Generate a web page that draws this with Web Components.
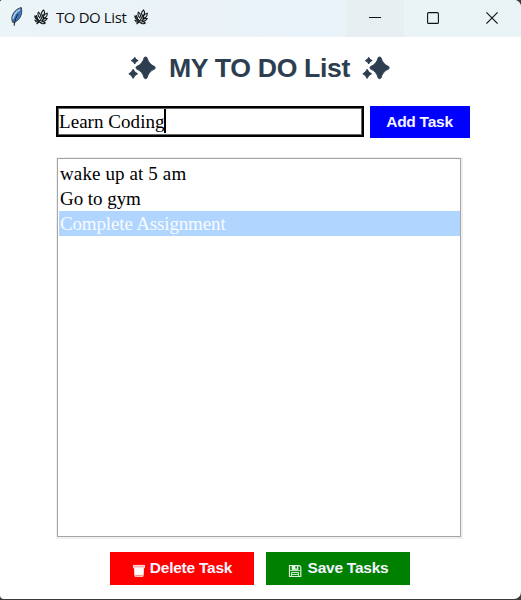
<!DOCTYPE html>
<html lang="en">
<head>
<meta charset="utf-8">
<title>TO DO List</title>
<style>html,body{margin:0;height:100%;overflow:hidden;background:#3a3a3c}</style>
</head>
<body>
<todo-window></todo-window>
<script>
const define = (name, html) => customElements.define(name, class extends HTMLElement {
  constructor() {
    super();
    const t = document.createElement('template');
    t.innerHTML = html;
    this.attachShadow({mode: 'open'}).append(t.content.cloneNode(true));
  }
});

define('feather-icon', `<style>:host{display:block;flex:none;width:14px;height:20px}svg{display:block}</style>
<svg width="14" height="20" viewBox="0 0 14 20"><path d="M11.3 .6C7 1.4 2.4 5.5 1.8 11.2L2.4 15.2 4.8 15.4C10 12.5 12.9 7 11.3 .6Z" fill="#3a78c0" stroke="#3b444f" stroke-width="1"/><path d="M9.8 2.5C6.5 4.5 3.6 8 3 12" stroke="#a9cdec" stroke-width="1.5" fill="none"/><path d="M8 7C6 10 4.5 13 4.2 18.8" stroke="#252a32" stroke-width="1.1" fill="none"/></svg>`);

define('herb-icon', `<style>:host{display:block;flex:none;width:14px;height:16px}svg{display:block}</style>
<svg width="14" height="16" viewBox="0 0 14 16" fill="none" stroke="#15191b" stroke-width="1.1"><path d="M2.5 15C5.5 13 7.5 10 8.7 6M5.6 12.4C4 11 2.6 9 2.2 6"/><path d="M8.7 7C6.8 5.2 7.4 2.6 9.6 1C11 3 10.6 5.4 8.7 7ZM5.7 8.8C3.9 7.3 3.7 5 4.4 3.1C6.4 4.6 6.9 7 5.7 8.8ZM9 9.2C9.4 6.6 10.9 4.8 13.2 4.2C13.4 6.8 11.8 8.8 9 9.2ZM3.6 10.6C1.7 10.2.9 8.7.8 7C2.7 7.4 3.7 8.7 3.6 10.6ZM4.8 13C3.2 13.4 1.7 12.6 1 11.2C2.8 10.6 4.2 11.4 4.8 13ZM7.8 11.6C9.4 9.6 11.4 9 13.2 9.6C12 11.8 9.8 12.6 7.8 11.6ZM6 13.4C8 12.4 10 12.8 11.2 14C9.4 15.3 7.5 14.8 6 13.4Z"/></svg>`);

define('sparkle-icon', `<style>:host{display:block;flex:none;width:28px;height:24px}svg{display:block}</style>
<svg width="28" height="24" viewBox="0 0 28 24" fill="#2c3e50" stroke="#2c3e50" stroke-width=".9" stroke-linejoin="round"><path d="M16.2 1.6Q17.6 .2 19 1.6Q20.8 8.4 26.6 10.5Q27.9 11.8 26.6 13.1Q20.8 15.2 19 22Q17.6 23.4 16.2 22Q14.4 15.2 8.6 13.1Q7.3 11.8 8.6 10.5Q14.4 8.4 16.2 1.6Z"/><path d="M6.7 1.2Q7.6 3.8 10.2 4.6Q7.6 5.5 6.7 8Q5.8 5.5 3.2 4.6Q5.8 3.8 6.7 1.2ZM5.1 13.2Q6.6 16.6 9.6 17.8Q6.6 19 5.1 22.4Q3.7 19 .8 17.8Q3.7 16.6 5.1 13.2Z"/></svg>`);

define('trash-icon', `<style>:host{display:block;width:14px;height:14px}svg{display:block}</style>
<svg width="14" height="14" viewBox="0 0 14 14"><path d="M1 1.2H13V3.2H1Z" fill="#ffb0b0"/><path d="M2 3.5H12L11.2 11.5H2.8Z" fill="#fff"/><path d="M1 1.4H13M1.4 2V3.6H12.6V2M2.3 3.6L3 12.4H11L11.7 3.6" stroke="#ffdcdc" fill="none"/></svg>`);

define('disk-icon', `<style>:host{display:block;width:14px;height:14px}svg{display:block}</style>
<svg width="14" height="14" viewBox="0 0 14 14"><path d="M1.5 1.5H11.5L12.8 3V12.5H1.5Z" stroke="#d9efdc" stroke-width="1.2" fill="none"/><path d="M4 1.5V5.8H10V1.5ZM1.5 6.5H12.8" fill="#e9f8ec" stroke="#d3edd6" stroke-width=".8"/><path d="M7.3 2.2H9V4.6H7.3Z" fill="#087d10"/><path d="M3.6 12.5V8.4H10.6V12.5M4 10.4H10" stroke="#d9efdc" fill="none"/></svg>`);

define('window-control', `<style>:host{display:flex;align-items:center;justify-content:center;height:37px;box-sizing:border-box;padding-bottom:1px}</style><slot></slot>`);

define('title-bar', `<style>
:host{display:flex;height:37px;background:linear-gradient(90deg,#ebf4f7,#eaf2f9 55%,#eaf2fa 66%,#eaf4f7 67%);color:#111;font:15px/20px "Open Sans","Noto Sans",sans-serif}
.caption{display:flex;width:346px;box-sizing:border-box;padding:7px 0 0 10px}
herb-icon{margin:2px 0 0 10px}
.name{white-space:pre;flex:none;width:70px;margin-left:8px;letter-spacing:-.4px}
.name+herb-icon{margin-left:8px}
.min{width:58px;background:#e7eff2}.max{width:59px;padding-right:1px}.close{width:58px}
svg{display:block}
</style>
<div class="caption"><feather-icon></feather-icon><herb-icon></herb-icon><span class="name">TO DO List</span><herb-icon></herb-icon></div>
<window-control class="min"><svg width="12" height="12"><path d="M0 5.5H12" stroke="#111"/></svg></window-control>
<window-control class="max"><svg width="12" height="12"><rect x=".6" y=".6" width="10.8" height="10.8" rx="1" fill="none" stroke="#111" stroke-width="1.1"/></svg></window-control>
<window-control class="close"><svg width="12" height="12"><path d="M.4 .4L11.6 11.6M11.6 .4L.4 11.6" stroke="#111" stroke-width="1.15"/></svg></window-control>`);

define('app-heading', `<style>
:host{display:flex;align-items:flex-start;padding:19px 0 0 128px;height:50px;box-sizing:border-box;color:#2c3e50}
span{font:bold 26.67px/24px "Liberation Sans",Arial,sans-serif;letter-spacing:-.35px;white-space:nowrap;width:182px;margin:0 11px 0 13px}
</style><sparkle-icon></sparkle-icon><span><slot></slot></span><sparkle-icon></sparkle-icon>`);

define('task-entry', `<style>
:host{display:flex;box-sizing:border-box;width:308px;height:31px;border:2px solid #000;box-shadow:inset 0 0 0 1px #666;background:#fff;padding:1px 0 0 1px;color:#000;font:19px/26px "Liberation Serif","Times New Roman",serif}
i{width:2px;height:24px;background:#000;margin-left:-1px}
span{letter-spacing:.05px}
</style><span><slot></slot></span><i></i>`);

define('task-button', `<style>
:host{display:flex;box-sizing:border-box;align-items:center;justify-content:center;background:var(--face);color:#f5f5ff;font:bold 15px/20px "Liberation Sans",Arial,sans-serif;white-space:nowrap}
</style><slot name="icon"></slot><slot></slot>`);

define('task-row', `<style>
:host{display:block;height:25px;padding-left:1px;font:19px/25px "Liberation Serif","Times New Roman",serif;color:#000;white-space:nowrap}
:host([selected]){background:#b0d5ff;color:#f8fbff}
</style><slot></slot>`);

define('task-list', `<style>
:host{display:block;box-sizing:border-box;width:407px;height:382px;border:1px solid #f0f0f0;border-right-width:2px;border-bottom-width:2px}
div{box-sizing:border-box;height:100%;border:1px solid #a5a5a5;padding:2px 0 0 1px}
</style><div><slot></slot></div>`);

define('todo-window', `<style>
:host{display:block;width:521px;height:599px;background:#fff;border-radius:3px 7px 7px 4px;overflow:hidden}
.entry{display:flex;padding:19px 0 0 56px;height:70px;box-sizing:border-box}
.add{--face:#0000ff;width:100px;height:32px;margin-left:6px;font-size:15.5px;letter-spacing:-.25px;padding-right:1px}
task-list{margin-left:56px}
.r1{letter-spacing:.12px}.r2{letter-spacing:-.05px}.r3{letter-spacing:-.15px}
.actions{display:flex;gap:12px;padding:13px 0 0 110px}
.actions task-button{width:144px;height:33px;padding-bottom:1px;font-size:15.5px;letter-spacing:-.25px}
.del{--face:#ff0000}.save{--face:#008000}
trash-icon{margin:5px 4px 0 0}disk-icon{margin:5px 6px 0 0}
</style>
<title-bar></title-bar>
<app-heading>MY TO DO List</app-heading>
<div class="entry"><task-entry>Learn Coding</task-entry><task-button class="add">Add Task</task-button></div>
<task-list><task-row class="r1">wake up at 5 am</task-row><task-row class="r2">Go to gym</task-row><task-row class="r3" selected>Complete Assignment</task-row></task-list>
<div class="actions"><task-button class="del"><trash-icon slot="icon"></trash-icon>Delete Task</task-button><task-button class="save"><disk-icon slot="icon"></disk-icon>Save Tasks</task-button></div>`);
</script>
</body>
</html>
